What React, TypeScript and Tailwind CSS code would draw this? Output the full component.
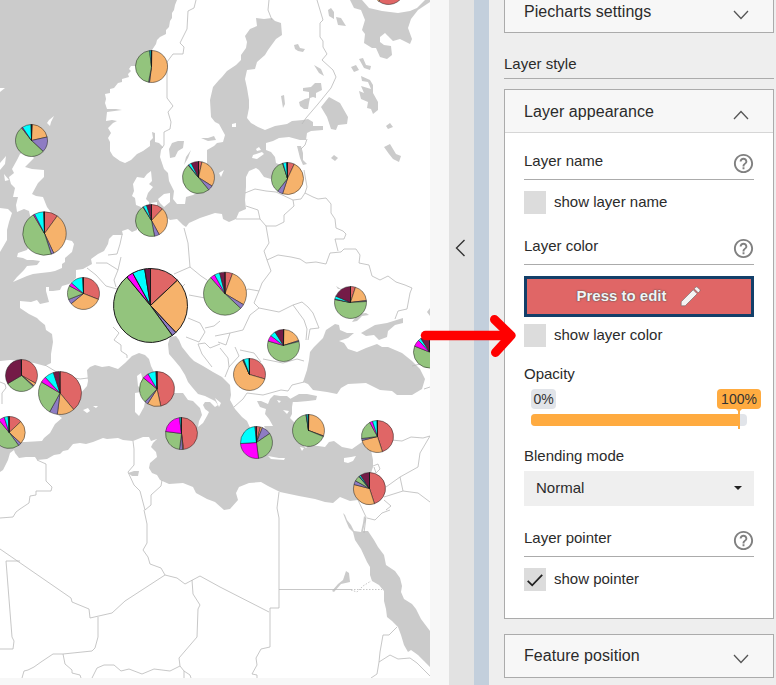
import React from "react";

const SEA = "#cbcbcb";
const COLORS = ["#e06666", "#f6b26b", "#8e7cc3", "#93c47d", "#ff00ff", "#00ffff", "#741b47"];

// Each pie: cx, cy, r, then cumulative percentages where the seven slices end.
const PIES: { x: number; y: number; r: number; ends: number[] }[] = [
  { x: 151.5, y: 66.5, r: 16, ends: [0.5, 52, 53, 98, 98, 99.5, 100] },
  { x: 31.5, y: 140.5, r: 16, ends: [1, 21.5, 37, 89.5, 90.5, 99.5, 100] },
  { x: 198.5, y: 177.5, r: 16, ends: [3.5, 34, 39, 89, 89.5, 92.5, 100] },
  { x: 151.5, y: 220.5, r: 16, ends: [12, 42, 47, 91, 91.5, 95, 100] },
  { x: 287.5, y: 178.5, r: 16, ends: [7, 55, 60.5, 95, 95.5, 99, 100] },
  { x: 44.5, y: 233.5, r: 21.7, ends: [10, 43, 45, 91.5, 92.5, 99.3, 100] },
  { x: 83.5, y: 293.5, r: 16, ends: [31, 64, 69, 83, 86.5, 99, 100] },
  { x: 150.5, y: 305.5, r: 37, ends: [13, 38, 40, 89, 92, 97.5, 100] },
  { x: 225, y: 293.7, r: 21.5, ends: [5.7, 33.5, 37, 88.5, 92, 96, 100] },
  { x: 350.5, y: 302.5, r: 16, ends: [5, 23, 24, 78, 78.5, 81.5, 100] },
  { x: 283.5, y: 345.5, r: 16, ends: [0.5, 20, 21, 79.5, 85.5, 91, 100] },
  { x: 249.5, y: 374.5, r: 16, ends: [29.5, 93, 93.5, 94, 94.3, 99.5, 100] },
  { x: 21.5, y: 375.5, r: 16, ends: [33, 36, 37, 66.5, 66.5, 66.5, 99.5] },
  { x: 60, y: 393, r: 21.5, ends: [39, 52, 58, 83.5, 88, 95, 99.5] },
  { x: 157, y: 389, r: 17.5, ends: [46.5, 59, 62, 86, 91.5, 99, 100] },
  { x: 181.5, y: 433.5, r: 16, ends: [48, 49, 52, 77, 98, 99.5, 100] },
  { x: 9.2, y: 432.5, r: 16, ends: [13, 37, 40, 89, 95, 99, 100] },
  { x: 256.5, y: 442.5, r: 16, ends: [4, 6, 15.5, 48, 74, 98.5, 100] },
  { x: 308.5, y: 430.5, r: 16, ends: [0.5, 30.5, 31.2, 97.5, 98, 99.5, 100] },
  { x: 377.5, y: 436.5, r: 16, ends: [45, 71, 73, 92, 95, 99.5, 100] },
  { x: 369.5, y: 488.5, r: 16, ends: [45, 79, 83, 88.5, 89, 90.5, 100] },
  { x: 429.5, y: 352, r: 16, ends: [12, 30, 31, 81, 88, 91, 100] },
  { x: 388.5, y: -12, r: 16.5, ends: [60, 70, 75, 85, 90, 95, 100] },
];

const SEAS = [
  // Atlantic, North Sea, Baltic
  "M0,0 L177,0 175,5 174,10 172,13 172,18 170,21 169,27 166,30 166,34 160,37 157,40 156,44 152,50 148,54 138,66 131,66 129,69 131,71 128,74 129,77 122,79 122,82 118,83 114,88 110,89 110,93 105,94 106,99 105,103 107,109 116,109 122,110 107,112 106,121 112,120 117,121 113,123 108,128 111,133 108,138 110,142 110,151 113,156 120,161 125,163 131,160 137,154 143,151 150,146 150,141 153,138 152,132 155,133 155,142 159,143 163,147 161,150 160,157 164,169 168,173 169,181 174,191 173,199 177,204 185,204 186,197 193,195 202,190 204,180 207,173 207,150 214,146 217,143 223,142 225,135 219,124 215,122 211,117 210,100 213,87 219,80 222,77 227,71 236,65 241,60 241,55 246,48 247,42 245,36 250,29 257,26 256,18 264,19 272,18 275,21 281,23 282,35 276,39 268,50 265,55 257,62 255,69 247,70 245,79 247,88 249,100 249,108 247,118 251,123 258,127 265,130 275,126 287,124 292,121 303,120 308,119 313,122 313,126 323,126 323,130 311,131 307,133 306,140 300,140 289,137 279,138 273,141 266,143 266,150 271,152 275,157 276,163 283,166 288,180 273,175 271,179 264,177 259,170 256,168 249,171 246,177 246,187 245,200 246,209 239,212 236,219 229,222 223,219 222,214 215,213 200,218 189,223 186,227 183,225 177,219 170,220 166,217 160,212 154,208 149,207 149,202 146,199 148,193 153,187 149,184 152,181 151,171 147,174 144,178 137,177 133,184 134,191 132,196 135,198 136,205 141,207 142,213 138,215 137,230 132,232 128,229 122,231 123,235 113,235 109,239 108,244 104,251 98,254 91,259 92,264 83,269 76,270 76,278 69,284 62,286 60,290 53,291 49,291 49,287 46,287 46,291 49,302 40,304 37,300 31,302 20,301 20,308 29,314 37,318 40,321 45,325 46,330 52,334 53,342 51,354 51,363 45,366 34,363 20,361 10,360 0,361Z",
  // Mediterranean
  "M0,442 L25,442 42,441 44,438 50,433 55,424 62,418 58,415 67,405 74,398 80,394 87,386 88,381 87,370 90,367 95,365 102,367 109,366 118,369 125,363 132,356 139,353 145,355 149,359 151,366 154,372 158,380 168,383 173,393 183,393 188,400 193,401 200,408 202,415 199,421 198,427 203,423 207,416 209,412 205,409 203,405 205,402 210,402 215,407 218,405 215,401 205,396 198,394 192,387 188,382 185,375 180,367 175,361 169,354 168,344 170,337 176,336 179,340 182,347 190,357 194,361 203,366 213,372 222,377 230,385 231,395 230,400 235,409 242,417 247,421 252,432 266,445 270,440 266,430 264,426 273,426 269,419 265,414 266,409 260,407 257,401 261,401 268,404 270,399 274,395 280,396 287,396 293,401 292,407 292,414 290,418 295,423 293,431 298,441 306,448 309,445 318,446 325,447 329,442 334,441 342,447 352,449 362,442 367,443 371,450 373,460 373,467 369,479 358,500 350,501 340,497 333,503 325,502 315,499 299,496 280,492 268,486 261,482 249,483 239,487 236,493 238,500 230,509 224,510 215,502 207,499 196,493 193,487 183,483 169,484 160,480 157,475 152,473 149,468 150,463 157,457 156,452 151,447 153,443 157,439 151,441 149,437 143,437 133,441 123,440 118,438 107,439 103,438 93,442 86,444 80,443 73,444 68,450 63,451 60,454 54,455 47,459 37,460 35,457 26,457 19,458 15,453 14,450 10,453 8,460 3,470 0,472Z",
  // Black Sea
  "M310,352 L314,347 323,338 326,330 335,324 339,325 340,330 347,333 354,333 348,338 339,341 344,343 348,349 357,352 366,348 377,344 382,347 388,347 402,353 412,361 420,369 425,379 422,389 412,395 397,395 392,391 380,390 366,383 348,384 341,388 337,394 327,392 313,390 308,384 303,382 307,370 309,360Z",
  "M361,333 L368,329 375,325 387,323 403,318 403,323 395,325 388,331 387,337 379,340 374,335 366,336Z",
  "M290,399 L299,394 307,394 317,396 316,400 308,401 297,402 286,402Z",
  // Red Sea
  "M343,513 L345,515 347,520 351,525 354,531 361,532 363,523 364,516 366,518 363,531 368,531 374,540 378,547 384,555 386,565 395,571 400,578 402,586 401,592 404,599 412,604 416,609 421,619 430,631 430,667 424,661 418,655 411,650 408,652 404,645 401,635 398,627 392,621 387,617 386,609 384,601 384,591 379,585 372,581 370,575 370,567 367,562 361,549 355,540 353,532 349,528 346,521Z",
  // White Sea
  "M350,0 L354,8 361,10 365,20 362,30 365,34 364,43 372,48 376,48 380,57 387,59 392,55 391,46 384,45 380,42 380,37 385,33 388,36 393,41 400,39 410,44 412,39 408,28 411,19 418,10 430,2 430,0 425,0 417,8 410,11 398,13 382,11 369,8 362,0Z",
  // Lakes
  "M329,97 L340,103 348,117 347,124 338,125 336,130 331,129 327,117 321,107Z",
  "M361,76 L370,80 373,85 373,93 378,102 378,110 373,114 371,109 367,108 368,102 361,99 359,91 364,93 361,86 371,89 368,82 362,81Z",
  "M328,10 L331,8 334,12 334,19 329,16ZM336,17 L341,18 346,26 338,25Z",
  "M294,45 L298,44 300,48 305,49 303,52 298,51 295,49Z",
  "M314,65 L321,69 324,76 319,73Z",
  "M303,88 L311,87 315,83 321,83 322,90 316,93 316,98 313,97 310,98 309,103 308,109 304,109 300,106 299,102 305,99 309,98 309,92 303,91Z",
  "M281,96 L284,95 285,104 283,108Z",
  "M351,67 L356,65 359,70 354,72ZM359,59 L363,58 366,65 371,66 370,70 364,68Z",
  "M386,126 L390,123 393,127 388,129Z",
  "M384,147 L390,144 396,154 401,156 399,162 393,159 389,154Z",
  "M331,158 L334,155 338,158 335,161Z",
  "M297,146 L301,146 303,153 303,160 307,164 303,165 300,158Z",
  "M169,149 L172,143 178,141 184,141 183,148 178,151 175,157 170,158Z",
  "M191,150 L188,158 184,165 186,157ZM201,138 L208,138 214,136 216,140 208,141Z",
  "M128,473 L134,471 139,471 138,476 132,476Z",
  "M346,571 L349,573 350,582 341,584 334,592 332,591 338,584 343,580Z",
  "M336,286 L341,289 338,289ZM352,322 L358,314 366,313 369,315 362,316 357,321Z",
  "M427,312 L430,308 430,316Z",
];

const ISLANDS = [
  // Great Britain
  "M17,160 L20,154 27,150 34,158 25,167 32,169 44,170 44,177 38,183 32,194 36,196 43,197 47,207 53,215 59,227 63,239 72,241 74,244 72,252 65,258 65,262 62,264 62,268 55,271 50,272 41,273 33,274 27,276 20,279 13,282 17,277 24,270 27,266 37,265 40,261 33,260 27,260 23,258 17,257 18,253 27,250 30,244 24,240 25,232 27,228 31,220 29,211 24,209 17,212 16,205 18,197 13,197 15,188 11,184 9,177 14,173 12,169Z",
  "M0,208 L8,209 12,213 9,222 7,230 7,240 0,252Z",
  "M0,163 L6,156 5,164 0,170ZM4,174 L9,180 5,181Z",
  "M49,120 L54,116 51,122 50,126 47,123ZM0,88 L5,88 0,92Z",
  "M158,199 L164,194 170,193 170,202 164,207 160,203ZM151,203 L157,202 157,208 153,207Z",
  "M253,155 L262,152 264,154 257,159 252,158ZM256,149 L259,147 261,150 257,151Z",
  "M219,173 L224,170 221,177ZM232,124 L236,123 236,127 232,127Z",
  // Mediterranean islands
  "M137,376 L141,373 143,381 141,389 138,386Z",
  "M135,393 L141,392 146,396 144,407 139,416 135,412Z",
  "M174,430 L196,427 191,437 180,436Z",
  "M83,410 L88,408 90,411 87,413ZM93,406 L98,406 96,408Z",
  "M268,456 L279,458 285,458 284,460 271,459Z",
  "M344,458 L351,457 356,456 353,461 348,463 344,462Z",
  "M300,447 L304,448 302,451ZM215,398 L221,403 219,407Z",
  "M283,410 L289,411 287,414ZM277,400 L281,401 279,403Z",
];

const BORDERS = [
  "M196,0 L194,8 188,11 187,29 180,43 184,47 183,54 173,54 167,62 167,98 173,106 168,112 171,122 170,129 164,132 164,145 162,148",
  "M269,0 L268,10 272,20",
  "M317,0 L323,20 320,23 320,37 323,41 323,47 327,54 322,60 333,70 336,77 331,88 318,104 306,118 302,124",
  "M307,139 L305,145 301,149 M245,193 L255,189 266,191 276,192 293,200 301,199 305,193 307,187 304,170",
  "M246,206 L258,210 260,219 236,219 M260,219 L266,226 276,226 284,222 284,215 294,206 293,200",
  "M305,193 L313,197 318,199 326,198 331,204 331,213 335,219 336,228 343,231 346,234 344,239 335,239 338,251",
  "M266,226 L269,243 264,251 267,260 278,255 291,257 300,259 306,263 316,262 326,264 330,253 341,252 344,249 356,249 360,255 359,263 369,265 372,276 380,280 388,276 396,282 405,285 412,288 410,293 407,309 398,311 395,319",
  "M267,260 L271,271 262,283 259,291 248,289 242,293 M259,291 L254,303 259,308 279,312 293,305 302,302 308,307 313,313 319,328 310,329 308,340",
  "M259,308 L250,315 243,330 230,333 215,336 M293,305 L304,320 307,329 306,340",
  "M184,228 L188,243 190,267 174,274 M190,267 L201,276 207,280 M189,295 L205,298",
  "M108,255 L117,254 120,244 122,235 M96,263 L107,263 115,268 118,270 121,257 M87,268 L96,275 106,286 117,289 M118,270 L114,280 116,287",
  "M113,327 L119,333 114,340 121,345 121,351 127,355 127,358 M186,337 L199,342 205,332 200,323 188,318",
  "M198,344 L205,343 210,348 220,344 M198,344 L202,354 212,367 M230,333 L226,345 218,342 M220,348 L228,358 229,367 225,377 M229,367 L239,356 235,347",
  "M240,350 L254,353 261,362 M263,359 L283,363 297,359 304,361 M263,395 L281,390 288,391 292,385 304,382 M234,407 L243,399 247,393 263,395",
  "M45,365 L55,371 63,376 80,379 88,378 M0,382 L5,384 6,388 2,393 2,404",
  "M37,460 L46,464 46,481 52,487 51,491 36,491 36,495 30,496 29,503 20,509 16,512 13,517 0,518",
  "M133,441 L134,449 134,465 128,472 134,485 140,491 145,510 151,505 151,495 161,486 162,480",
  "M144,510 L147,524 147,543 143,550 148,557 150,564 161,568 165,575 177,578 185,584 200,576 220,587 269,612",
  "M0,549 L71,598 72,602 89,609 90,618 112,613 125,601 165,575 M20,561 L6,561 12,637 14,641 13,649 0,649 M98,617 L98,637 95,648 92,651 63,654 53,654 41,662 34,667 28,670 24,671 22,678 M63,654 L65,664 72,670 72,673 80,675 81,678 M92,678 L97,668 104,665 114,665 121,671 129,669 142,674 154,669 170,671 180,666 179,658 197,637 198,609 200,605 193,594 192,580",
  "M180,666 L184,671 190,675 191,678 M184,671 L184,678",
  "M279,492 L277,508 279,518 279,608 270,608 270,647 261,649 256,658 257,665 252,674 257,675 257,678 M279,589.5 L351,589.5",
  "M358,500 L366,517 364,533 M373,466 L378,464 380,469 376,473 374,467 M367,518 L375,520 382,513 390,510 M384,500 L391,506 386,510",
  "M391,440 L402,441 411,437 423,438 430,436 M430,436 L420,453 418,467 400,477 386,487 M400,477 L403,491 384,497 M403,491 L418,493 430,502",
  "M397,627 L389,635 383,635 380,652 379,662 377,674 371,678 M379,662 L390,655 398,659 410,658 417,663 430,676",
  "M424,389 L430,387 M412,366 L420,364 430,367 M185,284 L181,288 176,302 M205,328 L214,326 220,321",
];

function slicePath(x: number, y: number, r: number, a: number, b: number) {
  const p = (v: number) => {
    const t = (v / 100) * Math.PI * 2;
    return `${(x + r * Math.sin(t)).toFixed(2)},${(y - r * Math.cos(t)).toFixed(2)}`;
  };
  return `M${x},${y} L${p(a)} A${r},${r} 0 ${b - a > 50 ? 1 : 0} 1 ${p(b)}Z`;
}

function MapView() {
  return (
    <svg className="block bg-white" width="430" height="678" viewBox="0 0 430 678">
      <g fill={SEA}>{SEAS.map((d) => <path key={d} d={d} />)}</g>
      <g fill="#fff">{ISLANDS.map((d) => <path key={d} d={d} />)}</g>
      <g fill="none" stroke="#b9b9b9" strokeWidth="0.8" strokeLinejoin="round">
        {BORDERS.map((d) => <path key={d} d={d} />)}
        <path d="M351,589.5 L382,589.5 M351,590 L357,592 363,586 371,581" strokeDasharray="1.5 1.5" />
      </g>
      {PIES.map((pie) => (
        <g key={`${pie.x}-${pie.y}`} stroke="#1a1a1a" strokeWidth={pie.r > 30 ? 1 : 0.5}>
          {pie.ends.map((end, i) => {
            const start = i ? pie.ends[i - 1] : 0;
            return end > start ? <path key={i} d={slicePath(pie.x, pie.y, pie.r, start, end)} fill={COLORS[i]} /> : null;
          })}
          <path d={`M${pie.x},${pie.y} V${pie.y - pie.r}`} strokeWidth="1" />
        </g>
      ))}
    </svg>
  );
}

function Chevron({ up = false }: { up?: boolean }) {
  return (
    <svg className="mt-2" width="16" height="10" viewBox="0 0 16 10" fill="none" stroke="#555" strokeWidth="1.3">
      <path d={up ? "M1,9 L8,1.5 15,9" : "M1,1 L8,8.5 15,1"} />
    </svg>
  );
}

function HelpIcon() {
  return (
    <svg className="-mr-px mt-[5px]" width="23" height="23" viewBox="0 0 24 24" fill="#808080">
      <path d="M11 18h2v-2h-2v2zm1-16C6.48 2 2 6.48 2 12s4.480 10 10 10 10-4.480 10-10S17.520 2 12 2zm0 18c-4.410 0-8-3.590-8-8s3.590-8 8-8 8 3.590 8 8-3.590 8-8 8zm0-14c-2.210 0-4 1.790-4 4h2c0-1.100.9-2 2-2s2 .9 2 2c0 2-3 1.750-3 5h2c0-2.250 3-2.500 3-5 0-2.210-1.790-4-4-4z" />
    </svg>
  );
}

function PanelHeader({ title, up }: { title: string; up?: boolean }) {
  return (
    <div className="flex h-[42px] shrink-0 items-center justify-between pr-[24px] pl-[19px] text-[16px]">
      <span className="mt-px tracking-[0.06px]">{title}</span>
      <Chevron up={up} />
    </div>
  );
}

function FieldTitle({ children }: { children: React.ReactNode }) {
  return (
    <div className="flex h-[37px] items-center justify-between border-b border-[#ababab]">
      <span>{children}</span>
      <HelpIcon />
    </div>
  );
}

function CheckRow({ label, checked = false }: { label: string; checked?: boolean }) {
  return (
    <div className="flex h-6 items-start gap-2">
      <span className="flex h-[23px] w-[22px] items-center justify-center bg-[#dcdcdc]">
        {checked && (
          <svg className="mt-0.5" width="16" height="13" viewBox="0 0 16 13" fill="none" stroke="#222" strokeWidth="1.8">
            <path d="M0.7,6.8 L5.2,11.3 15.2,0.9" />
          </svg>
        )}
      </span>
      <span className="mt-px">{label}</span>
    </div>
  );
}

export default function App() {
  return (
    <div className="relative flex h-[685px] w-[776px] overflow-hidden bg-[#eeeeee] font-['Liberation_Sans',Arial,sans-serif] text-[15px] leading-5 text-[#2b2b2b]">
      <main className="w-[449px] shrink-0 bg-[#f7f7f7]">
        <MapView />
      </main>
      <div className="flex w-[25px] shrink-0 bg-[#e2e2e2] pt-[239px] pl-[6px]">
        <svg width="11" height="18" viewBox="0 0 11 18" fill="none" stroke="#333" strokeWidth="1.4">
          <path d="M9.5,1 L1.5,9 9.5,17" />
        </svg>
      </div>
      <div className="w-[15px] shrink-0 bg-[#c3cfdc]" />
      <aside className="flex w-[285px] shrink-0 flex-col pl-[15px]">
        <div className="flex h-[33px] shrink-0 flex-col justify-end border border-t-0 border-[#ababab] bg-[#f7f7f7]">
          <PanelHeader title="Piecharts settings" />
        </div>
        <div className="mt-[21px] h-[25px] shrink-0 border-b border-[#ababab]">Layer style</div>
        <section className="mt-[10px] h-[530px] shrink-0 border border-[#ababab] bg-white">
          <div className="border-b border-[#d6d6d6] bg-[#f7f7f7]">
            <PanelHeader title="Layer appearance" up />
          </div>
          <div className="px-[19px] pt-[10px]">
            <FieldTitle>Layer name</FieldTitle>
            <div className="mt-[11px]"><CheckRow label="show layer name" /></div>
            <div className="mt-[13px]"><FieldTitle>Layer color</FieldTitle></div>
            <button className="mt-[11px] flex h-[41px] w-full items-center justify-center gap-[13px] border-3 border-[#133f69] bg-[#e06666] pr-[1px] pb-px font-bold text-[#f4f4f4] [text-shadow:0_0_1px_#555,0_0_2px_#555]">
              <span>Press to edit</span>
              <svg width="21" height="21" viewBox="0 0 21 21" fill="#f4f4f4" stroke="#666" strokeWidth="0.6">
                <path d="M1.200,19.800 V15.800 L13.200,3.800 L17.200,7.800 L5.200,19.800Z M14.200,2.800 L15.900,1.100 Q16.700,0.600 17.400,1.200 L19.800,3.600 Q20.400,4.400 19.800,5.200 L18.200,6.800Z" />
              </svg>
            </button>
            <div className="mt-[7px]"><CheckRow label="show layer color" /></div>
            <div className="mt-4">Opacity</div>
            <div className="mt-[5px] ml-[7px] flex w-[230px] justify-between text-[14px] text-[#333]">
              <span className="flex h-5 w-[25px] items-center justify-center rounded bg-[#e1e4e9]">0%</span>
              <span className="flex h-5 w-[44px] items-center justify-center rounded bg-[#ffab40]">100%</span>
            </div>
            <div className="relative mt-[5px] ml-[7px] h-3 w-[216px] overflow-visible rounded bg-[#e1e4e9]">
              <div className="h-3 w-[208px] rounded-l bg-[#ffab40]" />
              <div className="absolute -top-[5px] left-[207px] h-5 w-0.5 bg-[#ffab40]" />
              <div className="absolute -top-[5px] left-[205px] h-0 w-0 border-x-3 border-t-3 border-x-transparent border-t-[#ffab40]" />
            </div>
            <div className="mt-5">Blending mode</div>
            <div className="mt-[5px] flex h-[35px] items-center justify-between bg-[#efefef] pr-3 pl-3">
              <span className="-mt-px">Normal</span>
              <span className="-mt-0.5 h-0 w-0 border-x-4 border-t-4 border-x-transparent border-t-[#222]" />
            </div>
            <div className="mt-[14px]"><FieldTitle>Layer pointer</FieldTitle></div>
            <div className="mt-[11px]"><CheckRow label="show pointer" checked /></div>
          </div>
        </section>
        <section className="mt-[15px] h-11 shrink-0 border border-[#ababab] bg-[#f7f7f7]">
          <div className="-mt-px">
            <PanelHeader title="Feature position" />
          </div>
        </section>
      </aside>
      <svg className="absolute top-[314px] left-[419px]" width="98" height="44" viewBox="0 0 98 44" fill="none" stroke="#f00" strokeLinecap="round" strokeLinejoin="round">
        <path strokeWidth="9.500" d="M6.500,21.500 H91" />
        <path strokeWidth="9" d="M75.500,5.500 L92,21.500 76.500,38.500" />
      </svg>
    </div>
  );
}
